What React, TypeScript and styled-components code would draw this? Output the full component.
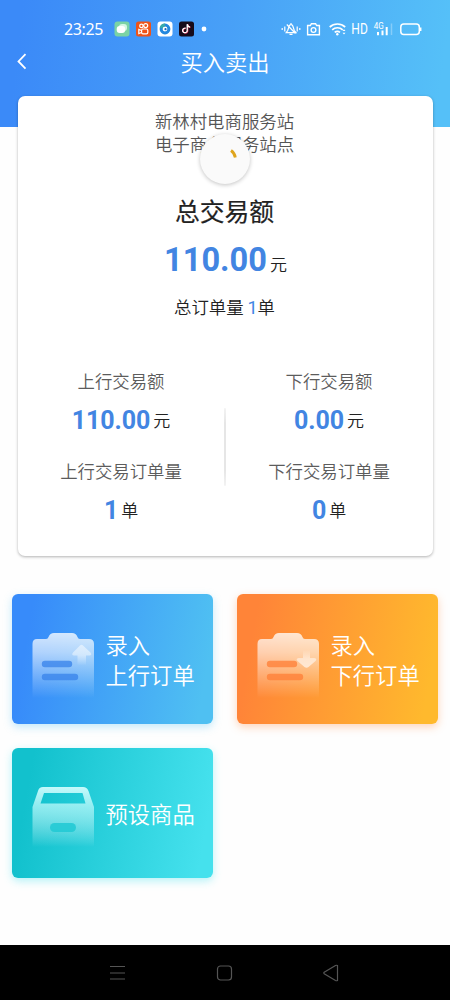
import React from "react";
import styled, { createGlobalStyle } from "styled-components";

const GlobalStyle = createGlobalStyle`
  * { box-sizing: border-box; }
  body {
    margin: 0;
    background: #fefefe;
    font-family: "Noto Sans CJK SC", sans-serif;
    font-weight: 350;
    color: #222;
  }
`;

const Screen = styled.div`
  width: 450px;
  height: 1000px;
  display: flex;
  flex-direction: column;
  overflow: hidden;
`;

const Header = styled.header`
  height: 127px;
  flex: none;
  background: linear-gradient(97deg, #3b8af8 5%, #48a0f7 50%, #55c0f8 97%);
  color: #fff;
`;

const StatusBar = styled.div`
  height: 42px;
  padding: 16px 28px 0 64px;
  display: flex;
  align-items: center;
  justify-content: space-between;
`;

const StatusGroup = styled.div`
  display: flex;
  align-items: center;
`;

const Clock = styled.span`
  width: 50px;
  font: 400 16px/26px "Noto Sans", sans-serif;
  letter-spacing: -0.35px;
`;

const TitleBar = styled.div`
  height: 40px;
  display: grid;
  grid-template-columns: 45px 1fr 45px;
  align-items: center;
`;

const Title = styled.h1`
  margin: -2px 0 0;
  text-align: center;
  font-size: 22.3px;
  font-weight: 350;
  line-height: 40px;
`;

const Card = styled.section`
  position: relative;
  flex: none;
  height: 460px;
  margin: -31px 17px 0 18px;
  padding-top: 13px;
  border-radius: 7px;
  background: #fff;
  box-shadow: 0 1px 3px rgba(0, 0, 0, 0.3);
`;

const Station = styled.div`
  padding-right: 2px;
  text-align: center;
  font-size: 17.4px;
  line-height: 23px;
  color: #555;
`;

const Spinner = styled.div`
  position: absolute;
  left: 182px;
  top: 38px;
  width: 50px;
  height: 50px;
  border-radius: 50%;
  background: #fafafa;
  box-shadow: 0 1px 4px rgba(0, 0, 0, 0.24);
`;

const Total = styled.div`
  display: flex;
  flex-direction: column;
  align-items: center;
  height: 201px;
  padding: 37px 2px 0 0;
`;

const TotalTitle = styled.div`
  font-size: 24.8px;
  font-weight: 400;
  line-height: 36px;
  -webkit-text-stroke: 0.2px #222;
`;

const TotalAmount = styled.div`
  display: flex;
  align-items: center;
  justify-content: center;
  height: 62px;
  margin-top: 1px;
  padding-left: 2px;
  gap: 3px;
  font-size: 17px;
  line-height: 40px;

  b {
    font-family: Roboto, sans-serif;
    font-size: 32.6px;
    font-weight: 700;
    color: #4285e2;
  }

  span {
    margin-top: 7px;
  }
`;

const StatAmount = styled.div`
  display: flex;
  align-items: center;
  justify-content: center;
  height: 50px;
  padding-top: 2px;
  gap: 3px;
  font-size: 17px;
  line-height: 40px;

  b {
    font-family: Roboto, sans-serif;
    font-size: 25px;
    font-weight: 700;
    letter-spacing: -0.1px;
    color: #4285e2;
  }

  span {
    margin-bottom: 2px;
  }
`;

const OrderTotal = styled.div`
  margin-top: 3px;
  font-size: 17.4px;
  line-height: 26px;

  span {
    font-family: Roboto, sans-serif;
    font-size: 18px;
    font-weight: 400;
    color: #3f86e4;
  }
`;

const Stats = styled.div`
  display: grid;
  grid-template-columns: 206px 2px 206px;
`;

const Divider = styled.div`
  height: 78px;
  margin-top: 52px;
  border-radius: 2px;
  background: linear-gradient(#f3f3f3, #e6e6e6 20%, #e6e6e6 80%, #f3f3f3);
`;

const StatColumn = styled.div`
  display: flex;
  flex-direction: column;
  padding-top: 10px;
`;

const StatLabel = styled.div`
  text-align: center;
  font-size: 17.4px;
  line-height: 28px;
  color: #5c5c5c;
`;

const StatItem = styled.div`
  height: 90px;
  padding-top: 1px;
`;

const Actions = styled.nav`
  flex: none;
  display: grid;
  grid-template-columns: 201px 201px;
  grid-auto-rows: 130px;
  gap: 24px;
  padding: 38px 0 0 12px;
`;

const tones = {
  blue: ["#378bfa", "#4fc0f2", "rgba(79, 192, 242, 0.35)"],
  orange: ["#ff8438", "#ffb92d", "rgba(255, 132, 56, 0.35)"],
  teal: ["#12c1cd", "#45e1ed", "rgba(69, 225, 237, 0.4)"],
};

type Tone = keyof typeof tones;

const ActionTile = styled.button<{ $tone: Tone }>`
  display: flex;
  align-items: center;
  gap: 11px;
  padding: 0 0 0 19.5px;
  border: 0;
  border-radius: 6px;
  background: linear-gradient(100deg, ${(p) => tones[p.$tone][0]} 10%, ${(p) => tones[p.$tone][1]} 93%);
  box-shadow: 0 3px 8px ${(p) => tones[p.$tone][2]};
  font: 350 22.3px/30px "Noto Sans CJK SC", sans-serif;
  color: #fff;
  text-align: left;

  svg {
    margin-top: ${(p) => (p.$tone === "teal" ? 10 : 14)}px;
  }
`;

const NavBar = styled.footer`
  height: 55px;
  flex: none;
  margin-top: auto;
  padding: 0 110px 0 109px;
  display: flex;
  align-items: center;
  justify-content: space-between;
  background: #000;
`;

const AppIcons = () => (
  <svg width="94" height="16" viewBox="0 0 94 16" fill="none">
    <rect x=".5" y=".5" width="15" height="15" rx="3" fill="#7bd3a5" />
    <rect x="5" y="3" width="8" height="7" rx="3" fill="#d5f7e3" />
    <rect x="2.7" y="5" width="8.5" height="7" rx="3" fill="#fff" />
    <rect x="22" y=".5" width="15" height="15" rx="2.5" fill="#ef5318" />
    <g stroke="#fff" strokeWidth="1.2">
      <circle cx="27.4" cy="4.9" r="1.7" />
      <circle cx="31.7" cy="4.6" r="2" />
      <rect x="27.6" y="8" width="6.2" height="4.8" rx="1.4" />
      <path d="m27.5 9.5-2.7-1.1v4.2l2.7-1.1" />
    </g>
    <rect x="43.5" y=".5" width="15" height="15" rx="3" fill="#fff" />
    <circle cx="51" cy="8" r="3.9" stroke="#2487de" strokeWidth="3" />
    <path d="M47.1 7A4 4 0 0 1 51 4.1" stroke="#39aaaa" strokeWidth="3" />
    <circle cx="51.5" cy="8.2" r="1.1" fill="#1767bd" />
    <rect x="65" y=".5" width="15" height="15" rx="2.5" fill="#170b1a" />
    <path d="M72 7.5a2.3 2.3 0 1 0 1.7 2.2V3.5c.4 2 1.4 2.7 2.8 2.9" stroke="#ed3e67" strokeWidth="1.3" />
    <path d="M71.5 7.2a2.3 2.3 0 1 0 1.7 2.2V3.2c.4 2 1.3 2.7 2.8 2.9" stroke="#fff" strokeWidth="1.3" />
    <circle cx="90" cy="8" r="2.4" fill="#fff" />
  </svg>
);

const SystemIcons = () => (
  <svg width="141" height="18" viewBox="0 0 141 18" fill="none" stroke="#fff" strokeWidth="1.2">
    <path d="M1.2 8v2M3.8 6.5v5M16.2 6.5v5M18.8 8v2M5.2 12.6h9.8L13.2 10.3 11.8 6a1.9 1.9 0 0 0-3.6 0L6.8 10.3zM8.5 14.4h3M5.8 4.5l8.7 9M10 3v1.5" />
    <path d="M26.6 5.5h2.8l1-1.8h4.2l1 1.8h2.8v9.3H26.6z" strokeWidth="1.4" />
    <circle cx="32.5" cy="10" r="2.4" strokeWidth="1.3" />
    <path d="M48.7 7a11.5 11.5 0 0 1 15.5 0M51.2 9.8a7.7 7.7 0 0 1 10.5 0M53.7 12.3a4.3 4.3 0 0 1 5.3 0" strokeWidth="1.7" />
    <circle cx="56.3" cy="14.3" r="1.2" fill="#fff" stroke="none" />
    <path d="m61.5 11 1.5-1.8 1.5 1.8zM61.5 12.7l1.5 1.8 1.5-1.8z" fill="#fff" stroke="none" />
    <g fill="#fff" stroke="none" fontFamily="Roboto, sans-serif">
      <text x="70.3" y="14.3" fontSize="14.5" fontWeight="400" textLength="16.5" lengthAdjust="spacingAndGlyphs">HD</text>
      <text x="92.8" y="9.2" fontSize="8.5" fontWeight="400" textLength="10" lengthAdjust="spacingAndGlyphs">4G</text>
    </g>
    <path d="M97 12V15.300M101.500 10.600V15.300M105.700 7V15.300" strokeWidth="2" />
    <path d="M110.500 3.500V15" strokeWidth="1.5" opacity=".3" />
    <rect x="119.8" y="4" width="18.5" height="10.5" rx="3" strokeWidth="1.5" />
    <path d="M139.700 7.500v3.500" strokeWidth="1.5" />
  </svg>
);

const BackIcon = () => (
  <svg width="30" height="20" viewBox="0 0 30 20" fill="none" stroke="#fff" strokeWidth="1.8">
    <path d="m25.500 2.200-7 7.300 7 7.200" />
  </svg>
);

const ClipboardIcon = ({ down = false }: { down?: boolean }) => {
  const id = down ? "clip-down" : "clip-up";
  return (
    <svg width="63" height="70" viewBox="0 0 63 70">
      <defs>
        <linearGradient id={id} x2="0" y2="1">
          <stop stopColor="#fff" stopOpacity=".78" />
          <stop offset=".3" stopColor="#fff" stopOpacity=".6" />
          <stop offset="1" stopColor="#fff" stopOpacity="0" />
        </linearGradient>
        <linearGradient id={`${id}-arrow`} x2="0" y2="1">
          <stop stopColor="#fff" stopOpacity={down ? 0 : 0.5} />
          <stop offset=".5" stopColor="#fff" stopOpacity={down ? 0.5 : 0.45} />
          <stop offset="1" stopColor="#fff" stopOpacity={down ? 0.65 : 0} />
        </linearGradient>
      </defs>
      <path
        d="M5 8h9q2 0 2.500-2Q18 2 22 2h18q4 0 5.500 4 .5 2 2.500 2h9q5 0 5 5v54H.5V13Q.5 8 5 8Z"
        fill={`url(#${id})`}
      />
      <path
        d="M13 33h24M13 46h30"
        stroke={down ? "#ff8038" : "#3a84ea"}
        strokeOpacity=".78"
        strokeWidth="6.4"
        strokeLinecap="round"
      />
      <path
        d={
          down
            ? "M46 19h7v8h4.500q3 .5 1 3l-7 6q-2 1.500-4 0l-7-6q-2-2.500 1-3H46z"
            : "M48 14.500q1.500-1.300 3 0l7.500 7q2 2.500-1 3H54v10h-8.500v-10H42q-3-.5-1-3z"
        }
        fill={`url(#${id}-arrow)`}
      />
    </svg>
  );
};

const BoxIcon = () => (
  <svg width="63" height="66" viewBox="0 0 63 66">
    <defs>
      <linearGradient id="box" x2="0" y2="1">
        <stop stopColor="#d9ffff" stopOpacity=".9" />
        <stop offset=".35" stopColor="#baf9fa" stopOpacity=".72" />
        <stop offset="1" stopColor="#fff" stopOpacity="0" />
      </linearGradient>
    </defs>
    <path
      fillRule="evenodd"
      d="M11 2h40q4 0 5.500 4L62 22v40H.5V22L6 6q1-4 5-4Zm1 6L8.500 18.500h45L50.500 8Z"
      fill="url(#box)"
    />
    <rect x="18" y="38" width="26" height="9" rx="4.5" fill="#20c9d3" fillOpacity=".85" />
  </svg>
);

const navStroke = { fill: "none", stroke: "#555", strokeWidth: 1.2 };

function Stat({ label, value, unit }: { label: string; value: string; unit: string }) {
  return (
    <StatItem>
      <StatLabel>{label}</StatLabel>
      <StatAmount>
        <b>{value}</b>
        <span>{unit}</span>
      </StatAmount>
    </StatItem>
  );
}

export default function App() {
  return (
    <Screen>
      <GlobalStyle />
      <Header>
        <StatusBar>
          <StatusGroup>
            <Clock>23:25</Clock>
            <AppIcons />
          </StatusGroup>
          <SystemIcons />
        </StatusBar>
        <TitleBar>
          <BackIcon />
          <Title>买入卖出</Title>
        </TitleBar>
      </Header>

      <Card>
        <Station>
          新林村电商服务站
          <br />
          电子商务服务站点
        </Station>
        <Spinner>
          <svg width="50" height="50" viewBox="0 0 50 50" fill="none">
            <path d="M31 16.500q3.700 2.500 4.300 7" stroke="#dfa51d" strokeWidth="2.8" />
          </svg>
        </Spinner>
        <Total>
          <TotalTitle>总交易额</TotalTitle>
          <TotalAmount>
            <b>110.00</b>
            <span>元</span>
          </TotalAmount>
          <OrderTotal>
            总订单量 <span>1</span>单
          </OrderTotal>
        </Total>
        <Stats>
          <StatColumn>
            <Stat label="上行交易额" value="110.00" unit="元" />
            <Stat label="上行交易订单量" value="1" unit="单" />
          </StatColumn>
          <Divider />
          <StatColumn>
            <Stat label="下行交易额" value="0.00" unit="元" />
            <Stat label="下行交易订单量" value="0" unit="单" />
          </StatColumn>
        </Stats>
      </Card>

      <Actions>
        <ActionTile $tone="blue">
          <ClipboardIcon />
          <span>
            录入
            <br />
            上行订单
          </span>
        </ActionTile>
        <ActionTile $tone="orange">
          <ClipboardIcon down />
          <span>
            录入
            <br />
            下行订单
          </span>
        </ActionTile>
        <ActionTile $tone="teal">
          <BoxIcon />
          <span>预设商品</span>
        </ActionTile>
      </Actions>

      <NavBar>
        <svg width="17" height="18" {...navStroke}>
          <path d="M1 2.500h15M1 9h15M1 15h15" />
        </svg>
        <svg width="17" height="18" {...navStroke}>
          <rect x="1.5" y="2" width="14" height="14" rx="3" />
        </svg>
        <svg width="17" height="18" {...navStroke}>
          <path d="M14.500 1.500v15q-1 .5-2 0L1.200 9.700q-.8-.7 0-1.400l11.300-6.800q1-.5 2 0Z" />
        </svg>
      </NavBar>
    </Screen>
  );
}
